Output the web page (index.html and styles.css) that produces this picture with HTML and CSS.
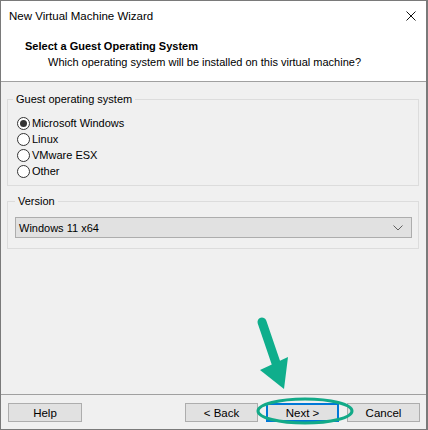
FILE: index.html
```html
<!DOCTYPE html>
<html lang="en">

<head>
    <meta charset="UTF-8">
    <meta name="viewport" content="width=device-width, initial-scale=1.0">
    <title>New Virtual Machine Wizard</title>
    <link rel="stylesheet" href="styles.css">
</head>

<body>

    <div class="window">
        <div class="titlebar">
            <span class="title">New Virtual Machine Wizard</span>
            <svg class="close" width="10" height="10" viewBox="0 0 10 10">
                <path d="M0.5 0.5 L9.5 9.5 M9.5 0.5 L0.5 9.5" stroke="#111" stroke-width="1" fill="none" />
            </svg>
        </div>

        <div class="header">
            <h1>Select a Guest Operating System</h1>
            <p>Which operating system will be installed on this virtual machine?</p>
        </div>

        <div class="content">
            <fieldset class="group">
                <legend>Guest operating system</legend>
                <label class="radio"><span class="dot checked"></span>Microsoft Windows</label>
                <label class="radio"><span class="dot"></span>Linux</label>
                <label class="radio"><span class="dot"></span>VMware ESX</label>
                <label class="radio"><span class="dot"></span>Other</label>
            </fieldset>

            <fieldset class="group version">
                <legend>Version</legend>
                <div class="select">
                    <span>Windows 11 x64</span>
                    <svg width="10" height="6" viewBox="0 0 10 6">
                        <path d="M0.5 0.5 L5 5 L9.5 0.5" stroke="#606060" stroke-width="1" fill="none" />
                    </svg>
                </div>
            </fieldset>
        </div>

        <div class="footer">
            <button class="btn">Help</button>
            <div class="nav">
                <button class="btn">&lt; Back</button>
                <button class="btn default">Next &gt;</button>
                <button class="btn">Cancel</button>
            </div>
        </div>

        <!-- annotation drawn over the dialog -->
        <svg class="annotation" width="428" height="430" viewBox="0 0 428 430">
            <ellipse cx="305" cy="411" rx="47" ry="12" stroke="#12aa88" stroke-width="3" fill="none" />
            <path d="M262 322 L277 366" stroke="#0fae8c" stroke-width="9" stroke-linecap="round" fill="none" />
            <polygon points="260,370 288,357 284,389" fill="#0fae8c" />
        </svg>
    </div>

</body>

</html>
```

FILE: styles.css
```css
/* Dialog frame */
body {
    margin: 0;
    font-family: "Liberation Sans", Arial, sans-serif;
    font-size: 11px;
    color: #000;
    background-color: #f0f0f0;
}

.window {
    position: relative;
    width: 428px;
    height: 430px;
    box-sizing: border-box;
    border: 1px solid #7a7a7a;
    border-right-width: 2px;
    display: flex;
    flex-direction: column;
    background-color: #f0f0f0;
}

.titlebar {
    height: 29px;
    background-color: white;
    display: flex;
    align-items: center;
    justify-content: space-between;
    padding: 0 10px 0 8px;
}

.title {
    font-size: 11.5px;
    line-height: 16px;
}

/* Header */
.header {
    background-color: white;
    height: 52px;
    border-bottom: 1px solid #a0a0a0;
    box-sizing: border-box;
}

.header h1 {
    margin: 0;
    padding: 8px 0 0 24px;
    font-size: 11px;
    font-weight: bold;
    line-height: 16px;
}

.header p {
    margin: 0;
    padding-left: 47px;
    line-height: 16px;
}

/* Group boxes */
.content {
    flex: 1;
    padding: 0 7px 0 6px;
}

.group {
    margin: 10px 0 0 0;
    padding: 9px 8px 6px 5px;
    border: 1px solid #dcdcdc;
}

.group legend {
    padding: 0 3px;
    line-height: 14px;
}

.radio {
    display: flex;
    align-items: center;
    height: 16px;
    padding-left: 4px;
}

.dot {
    width: 11px;
    height: 11px;
    border: 1px solid #333;
    border-radius: 50%;
    background-color: white;
    margin-right: 2px;
    display: flex;
    align-items: center;
    justify-content: center;
}

.dot.checked::after {
    content: "";
    width: 7px;
    height: 7px;
    border-radius: 50%;
    background-color: #333;
}

.version {
    margin-top: 8px;
    padding: 9px 6px 10px 7px;
}

.select {
    height: 21px;
    box-sizing: border-box;
    border: 1px solid #adadad;
    background-color: #e1e1e1;
    display: flex;
    align-items: center;
    justify-content: space-between;
    padding: 0 8px 0 3px;
}

/* Buttons */
.footer {
    border-top: 1px solid #a0a0a0;
    padding: 8px 6px 7px 7px;
    display: flex;
    justify-content: space-between;
}

.nav {
    display: flex;
    gap: 8px;
}

.btn {
    width: 73px;
    height: 19px;
    padding: 0;
    font-family: inherit;
    font-size: 11.5px;
    color: #000;
    background-color: #e1e1e1;
    border: 1px solid #adadad;
}

.footer > .btn {
    width: 74px;
}

.btn.default {
    border: 2px solid #0078d7;
}

.annotation {
    position: absolute;
    top: -1px;
    left: -1px;
    pointer-events: none;
}
```
